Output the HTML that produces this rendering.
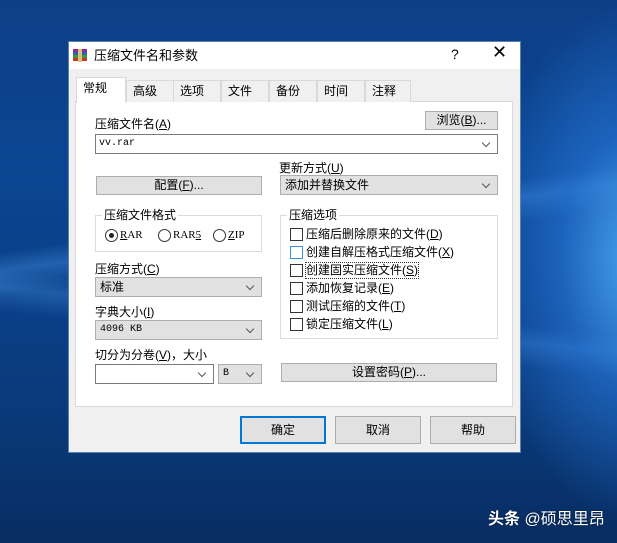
<!DOCTYPE html>
<html><head><meta charset="utf-8"><style>
*{margin:0;padding:0;box-sizing:border-box}
body{width:617px;height:543px;overflow:hidden;position:relative;font-family:"Liberation Sans","Noto Sans CJK SC",sans-serif;font-size:12px;line-height:15px;color:#000;
background:
radial-gradient(ellipse 160px 260px at 640px 260px,#4aa6f0 0%,rgba(40,120,220,0.6) 50%,rgba(0,0,0,0) 100%),
linear-gradient(172deg,rgba(0,0,0,0) 40%,rgba(80,160,240,0.35) 43%,rgba(0,0,0,0) 47%),
linear-gradient(186deg,rgba(0,0,0,0) 55%,rgba(80,160,240,0.3) 58%,rgba(0,0,0,0) 62%),
linear-gradient(180deg,#0d3f86 0%,#0b4591 30%,#0a3f88 55%,#0a3a7a 75%,#082d62 100%);}
.a{position:absolute}
.dlg{left:68px;top:41px;width:453px;height:412px;background:#f0f0f0;border:1px solid #5a7fb0}
.title{left:0;top:0;width:451px;height:27px;background:#fff}
.btn{position:absolute;background:#e1e1e1;border:1px solid #adadad;text-align:center;line-height:17px}
.dd{position:absolute;background:#e1e1e1;border:1px solid #adadad;padding-left:4px;line-height:18px}
.dd:after,.cb:after{content:"";position:absolute;right:8px;top:5px;width:5px;height:5px;border-right:1px solid #555;border-bottom:1px solid #555;transform:rotate(45deg)}
.cb{position:absolute;background:#fff;border:1px solid #7a7a7a;padding-left:3px;line-height:17px;font-family:"Liberation Mono",monospace;font-size:10px}
.tab{position:absolute;top:38px;height:22px;border:1px solid #d9d9d9;border-bottom:none;background:#f0f0f0;padding:3px 0 0 6px;font-size:12px}
.grp{position:absolute;border:1px solid #dcdcdc}
.gt{position:absolute;background:#fff;padding:0 2px;top:-8px;left:6px}
.chk{position:absolute;left:9px;width:13px;height:13px;border:1px solid #333;background:#fff}
.cl{position:absolute;left:25px}
.rad{position:absolute;width:13px;height:13px;border:1px solid #333;border-radius:50%;background:#fff;top:13px}
</style></head><body>
<div class="a dlg">
 <div class="a title">
  <svg class="a" style="left:3px;top:5px" width="17" height="17" viewBox="0 0 17 17"><rect x="1" y="2" width="14" height="3" fill="#8a2b8f"/><rect x="1" y="5" width="14" height="3" fill="#2a63b8"/><rect x="1" y="8" width="14" height="3" fill="#3a9a3a"/><rect x="1" y="11" width="14" height="3" fill="#c8372d"/><rect x="6" y="2" width="4" height="13" fill="#d9c07a"/></svg>
  <div class="a" style="left:25px;top:6px;font-size:13px">压缩文件名和参数</div>
  <div class="a" style="left:382px;top:5px;font-size:14px">?</div>
  <div class="a" style="left:423px;top:3px;font-size:18px;font-weight:300">✕</div>
 </div>
 <div class="a" style="left:6px;top:59px;width:438px;height:306px;background:#fff;border:1px solid #d9d9d9"></div>
 <div class="tab" style="left:7px;top:35px;width:50px;height:26px;background:#fff;border-color:#d9d9d9;z-index:2">常规</div>
 <div class="tab" style="left:57px;width:48px">高级</div>
 <div class="tab" style="left:104px;width:48px">选项</div>
 <div class="tab" style="left:152px;width:48px">文件</div>
 <div class="tab" style="left:200px;width:48px">备份</div>
 <div class="tab" style="left:248px;width:48px">时间</div>
 <div class="tab" style="left:296px;width:46px">注释</div>

 <div class="a" style="left:26px;top:75px">压缩文件名(<u>A</u>)</div>
 <div class="btn" style="left:356px;top:69px;width:73px;height:19px">浏览(<u>B</u>)...</div>
 <div class="cb" style="left:26px;top:92px;width:403px;height:20px">vv.rar</div>
 <div class="a" style="left:210px;top:119px">更新方式(<u>U</u>)</div>
 <div class="btn" style="left:27px;top:134px;width:166px;height:19px">配置(<u>F</u>)...</div>
 <div class="dd" style="left:211px;top:133px;width:218px;height:20px">添加并替换文件</div>

 <div class="grp" style="left:26px;top:173px;width:167px;height:37px"><div class="gt">压缩文件格式</div>
  <div class="rad" style="left:9px"><div class="a" style="left:3px;top:3px;width:5px;height:5px;border-radius:50%;background:#222"></div></div>
  <div class="a" style="left:24px;top:12px;font-family:'Liberation Serif',serif;font-size:11px"><u>R</u>AR</div>
  <div class="rad" style="left:62px"></div>
  <div class="a" style="left:77px;top:12px;font-family:'Liberation Serif',serif;font-size:11px">RAR<u>5</u></div>
  <div class="rad" style="left:117px"></div>
  <div class="a" style="left:132px;top:12px;font-family:'Liberation Serif',serif;font-size:11px"><u>Z</u>IP</div>
 </div>
 <div class="a" style="left:26px;top:220px">压缩方式(<u>C</u>)</div>
 <div class="dd" style="left:26px;top:235px;width:167px;height:20px">标准</div>
 <div class="a" style="left:26px;top:263px">字典大小(<u>I</u>)</div>
 <div class="dd" style="left:26px;top:278px;width:167px;height:20px;font-family:'Liberation Mono',monospace;font-size:10px">4096 KB</div>
 <div class="a" style="left:26px;top:306px">切分为分卷(<u>V</u>)，大小</div>
 <div class="cb" style="left:26px;top:322px;width:119px;height:20px"></div>
 <div class="dd" style="left:149px;top:322px;width:44px;height:20px;font-family:'Liberation Mono',monospace;font-size:10px">B</div>

 <div class="grp" style="left:211px;top:173px;width:218px;height:124px"><div class="gt">压缩选项</div>
  <div class="chk" style="top:12px"></div><div class="cl" style="top:11px">压缩后删除原来的文件(<u>D</u>)</div>
  <div class="chk" style="top:30px;border-color:#3a8fd8"></div><div class="cl" style="top:29px">创建自解压格式压缩文件(<u>X</u>)</div>
  <div class="chk" style="top:48px"></div><div class="cl" style="top:47px;outline:1px dotted #333">创建固实压缩文件(<u>S</u>)</div>
  <div class="chk" style="top:66px"></div><div class="cl" style="top:65px">添加恢复记录(<u>E</u>)</div>
  <div class="chk" style="top:84px"></div><div class="cl" style="top:83px">测试压缩的文件(<u>T</u>)</div>
  <div class="chk" style="top:102px"></div><div class="cl" style="top:101px">锁定压缩文件(<u>L</u>)</div>
 </div>
 <div class="btn" style="left:212px;top:321px;width:216px;height:19px">设置密码(<u>P</u>)...</div>

 <div class="btn" style="left:171px;top:374px;width:86px;height:28px;line-height:24px;border:2px solid #0078d7">确定</div>
 <div class="btn" style="left:266px;top:374px;width:86px;height:28px;line-height:26px">取消</div>
 <div class="btn" style="left:361px;top:374px;width:86px;height:28px;line-height:26px">帮助</div>
</div>
<div class="a" style="left:488px;top:510px;color:#fff;font-size:16px;line-height:20px;text-shadow:0 0 2px rgba(0,0,0,.5)"><b>头条</b> @硕思里昂</div>
</body></html>
